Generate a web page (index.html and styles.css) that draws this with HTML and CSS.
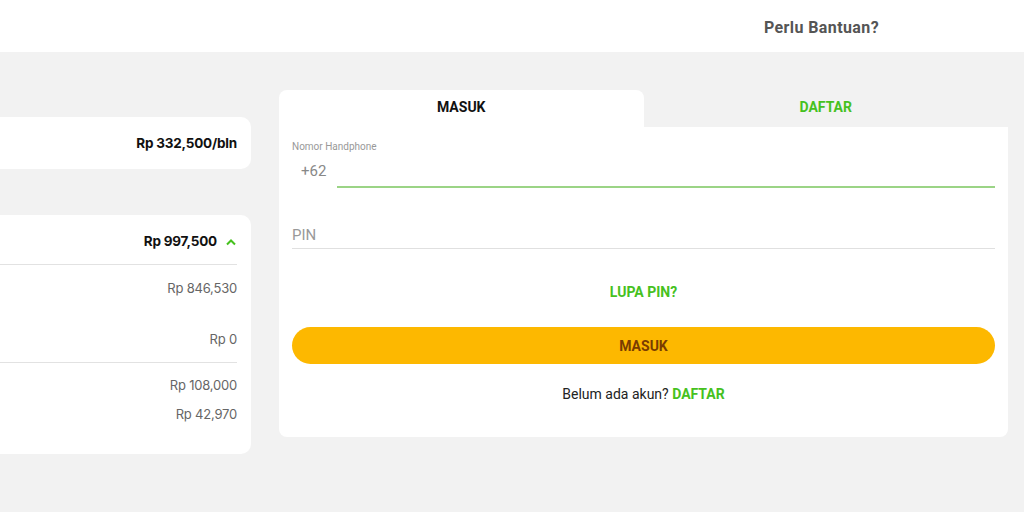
FILE: index.html
```html
<!DOCTYPE html>
<html lang="id">
<head>
<meta charset="utf-8">
<link rel="stylesheet" href="styles.css">
</head>
<body>
<header class="topbar">
  <a class="help">Perlu Bantuan?</a>
</header>
<main class="main">
  <section class="summary">
    <div class="card card-small">
      <span class="amount-strong">Rp 332,500/bln</span>
    </div>
    <div class="card card-detail">
      <div class="row row-head">
        <span class="amount-strong">Rp 997,500</span>
        <svg class="chev" width="12" height="8" viewBox="0 0 12 8"><path d="M2 6.5 L6 2.5 L10 6.5" fill="none" stroke="#46c11e" stroke-width="2"/></svg>
      </div>
      <div class="group">
        <div class="row r1">Rp 846,530</div>
        <div class="row r2">Rp 0</div>
      </div>
      <div class="group group-last">
        <div class="row r3">Rp 108,000</div>
        <div class="row r4">Rp 42,970</div>
      </div>
    </div>
  </section>
  <section class="auth">
    <nav class="tabs">
      <div class="tab tab-active">MASUK</div>
      <div class="tab tab-idle">DAFTAR</div>
    </nav>
    <div class="panel">
      <label class="label">Nomor Handphone</label>
      <div class="phone">
        <span class="prefix">+62</span>
        <div class="phone-input"></div>
      </div>
      <div class="pin">PIN</div>
      <div class="forgot">LUPA PIN?</div>
      <button class="btn">MASUK</button>
      <p class="signup">Belum ada akun? <b>DAFTAR</b></p>
    </div>
  </section>
</main>
</body>
</html>
```
FILE: styles.css
```css
* { box-sizing: border-box; }
html, body { margin: 0; padding: 0; }
body {
  width: 1024px;
  height: 512px;
  overflow: hidden;
  background: #f2f2f2;
  font-family: Roboto, "Liberation Sans", sans-serif;
  color: #222;
}
.topbar {
  height: 52px;
  background: #fff;
  display: flex;
  align-items: center;
  justify-content: flex-end;
  padding-right: 145px;
}
.help {
  font-size: 16px;
  font-weight: 700;
  color: #555;
  letter-spacing: 0.4px;
  padding-top: 3px;
}
.main {
  display: flex;
  gap: 28px;
  padding: 38px 16px 0 0;
}
.summary {
  width: 251px;
  flex: none;
  padding-top: 27px;
  display: flex;
  flex-direction: column;
  gap: 46px;
}
.card {
  background: #fff;
  border-radius: 0 10px 10px 0;
  padding-right: 14px;
}
.card-small {
  height: 52px;
  display: flex;
  align-items: center;
  justify-content: flex-end;
}
.amount-strong {
  font-family: Inter, sans-serif;
  font-weight: 700;
  font-size: 13.5px;
  color: #111;
  letter-spacing: -0.2px;
}
.card-detail {
  height: 239px;
  font-family: Inter, sans-serif;
}
.row {
  display: flex;
  justify-content: flex-end;
  align-items: center;
  font-size: 13px;
  color: #666;
  letter-spacing: -0.2px;
}
.row-head {
  height: 50px;
  gap: 8px;
  padding-top: 2px;
  border-bottom: 1px solid #e2e2e2;
}
.chev { margin-top: 2px; }
.group {
  border-bottom: 1px solid #e2e2e2;
  padding: 12px 0 12px;
}
.group-last { border-bottom: none; padding-top: 12px; }
.r1 { height: 22px; }
.r2 { height: 22px; margin-top: 29px; }
.r3 { height: 20px; }
.r4 { height: 20px; margin-top: 9px; }

.auth {
  flex: 1;
  display: flex;
  flex-direction: column;
}
.tabs {
  display: flex;
  height: 37px;
}
.tab {
  flex: 1;
  display: flex;
  align-items: center;
  justify-content: center;
  font-weight: 700;
  font-size: 14px;
  padding-bottom: 4px;
}
.tab-active {
  background: #fff;
  border-radius: 8px 8px 0 0;
  color: #111;
}
.tab-idle { color: #46c11e; }
.panel {
  background: #fff;
  border-radius: 0 0 8px 8px;
  height: 310px;
  padding: 14px 13px 0 13px;
  display: flex;
  flex-direction: column;
}
.label {
  font-size: 10px;
  color: #999;
  height: 14px;
}
.phone {
  display: flex;
  align-items: flex-end;
  height: 33px;
}
.prefix {
  font-size: 15px;
  color: #888;
  width: 45px;
  padding-left: 9px;
  align-self: center;
  padding-bottom: 2px;
}
.phone-input {
  flex: 1;
  border-bottom: 2px solid #9bd486;
  height: 100%;
}
.pin {
  margin-top: 34px;
  font-size: 15px;
  color: #999;
  height: 27px;
  border-bottom: 1px solid #e0e0e0;
  display: flex;
  align-items: center;
}
.forgot {
  margin-top: 35px;
  text-align: center;
  font-weight: 700;
  font-size: 14px;
  color: #46c11e;
}
.btn {
  margin-top: 27px;
  height: 37px;
  border: none;
  border-radius: 19px;
  background: #fdb800;
  color: #7a3c00;
  font-family: Roboto, sans-serif;
  font-weight: 700;
  font-size: 14px;
  width: 100%;
}
.signup {
  margin: 22px 0 0;
  text-align: center;
  font-size: 14px;
  color: #222;
}
.signup b { color: #46c11e; }
```
